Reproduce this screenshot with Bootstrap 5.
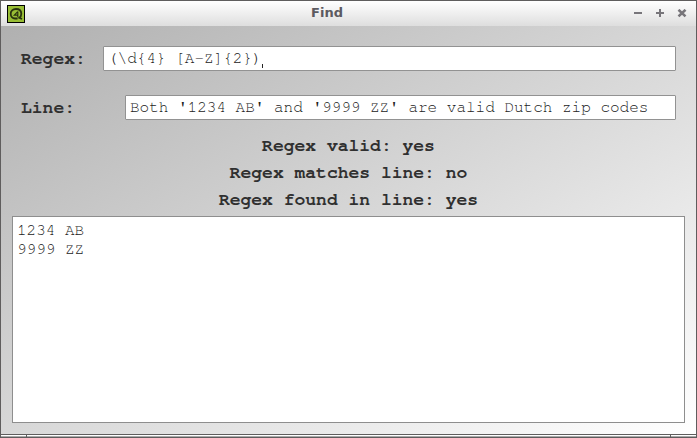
<!DOCTYPE html>
<html lang="en">
<head>
<meta charset="utf-8">
<title>Find</title>
<link href="https://cdn.jsdelivr.net/npm/bootstrap@5.3.0/dist/css/bootstrap.min.css" rel="stylesheet">
<style>
body{margin:0;overflow:hidden;font-family:"FreeMono","Nimbus Mono PS","Courier New","Liberation Mono",monospace;color:#303030}
.window-frame{width:697px;height:438px;background:#5f5d5d;padding:1px 1px 0}
.titlebar{height:25px;background:linear-gradient(#fff,#dedede);padding:0 8px 0 6px}
.window-title{font:bold 13px/22px "DejaVu Sans",sans-serif;color:#5c5a60;margin-right:41px;margin-top:-1px}
.window-tools{width:54px}
.app-icon{width:54px}
.content-pane{height:408px;background:linear-gradient(to bottom right,#b0b0b0,#fff);padding:20px 11px 0}
.prompt{font-weight:700;font-size:18px;line-height:27px;padding-left:9px}
.field-row{height:25px;padding-right:9px}
.field-row + .field-row{margin-top:24px}
.entry{height:25px;border:1px solid #929292;border-radius:1px;background:#fff;font-size:16px;line-height:23px;white-space:pre;color:#222}
.regex-prompt{width:91px}.line-prompt{width:113px}
.regex-entry{padding-left:4px}.line-entry{padding-left:4px}
.caret{width:1px;height:4px;background:#222;margin-top:17px}
.status-text{font-weight:700;font-size:18px;line-height:27px;margin-top:13px;height:81px}
.results{width:673px;height:207px;margin-top:2px;border:1px solid #8e8e8e;background:#fff;padding:4px;font-size:16px;line-height:19px;color:#222}
.resize-strip{height:1px;background:#fff;margin-top:1px}
.resize-edge{height:1px;background:#aaa}
.resize-strip,.resize-edge{padding:0 25px}
.resize-strip i,.resize-edge i{width:1px;background:#5f5d5d}
</style>
</head>
<body>
<div class="window-frame d-flex flex-column">
<header class="titlebar d-flex justify-content-between align-items-center">
<div class="app-icon d-flex"><svg width="18" height="18" viewBox="0 0 18 18"><path fill="#000" d="M0 0h18v18H0z"/><path fill="#98bd35" d="M1 1h16v16H1z"/><path d="M10.500 13.500H8C5.500 13.500 3.700 11.500 3.700 8.800S5.700 4 9 4s5.300 2 5.300 4.800c0 2-.8 3.200-2 4L15 14" fill="none" stroke="#28320f" stroke-width="1.800"/><path d="M10.800 6.500v5.500M10.500 6.800L7.300 10.200H11" fill="none" stroke="#28320f" stroke-width="1.200"/></svg></div>
<div class="window-title">Find</div>
<div class="window-tools d-flex"><svg width="54" height="10" viewBox="0 0 54 10" stroke="#77757a" stroke-width="2" fill="none"><path d="M0 4h8M22 4h8M26 0v8"/><path stroke-width="2.600" d="M44.500 .8l7 6.600M51.500 .8l-7 6.600"/></svg></div>
</header>
<main class="content-pane">
<div class="field-row d-flex"><div class="prompt regex-prompt">Regex:</div><div class="entry regex-entry flex-grow-1 d-flex">(\d{4} [A-Z]{2})<span class="caret"></span></div></div>
<div class="field-row d-flex"><div class="prompt line-prompt">Line:</div><div class="entry line-entry flex-grow-1">Both '1234 AB' and '9999 ZZ' are valid Dutch zip codes</div></div>
<div class="status-text text-center"><div>Regex valid: yes</div><div>Regex matches line: no</div><div>Regex found in line: yes</div></div>
<div class="results"><div>1234 AB</div><div>9999 ZZ</div></div>
</main>
<div class="resize-strip d-flex justify-content-between"><i></i><i></i></div>
<div class="resize-edge d-flex justify-content-between"><i></i><i></i></div>
</div>
<script src="https://cdn.jsdelivr.net/npm/bootstrap@5.3.0/dist/js/bootstrap.bundle.min.js"></script>
</body>
</html>
